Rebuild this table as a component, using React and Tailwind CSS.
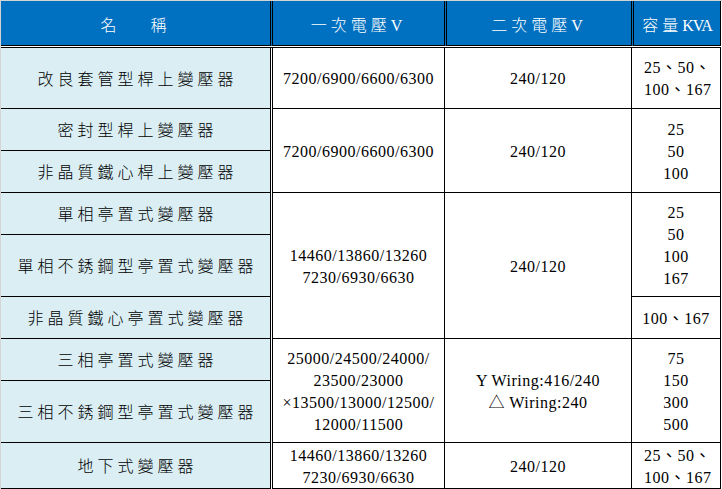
import React from 'react';

const nameCell =
  "flex items-center justify-center pl-[4px] pt-[3px] bg-[#daeef3] border-r border-b border-black tracking-[4px] text-[16px] font-light";
const valCell =
  "flex flex-col items-center justify-center pt-[2px] border-r border-b border-black text-[16px] leading-[22px] tracking-[0.5px]";

const names = [
  '改良套管型桿上變壓器',
  '密封型桿上變壓器',
  '非晶質鐵心桿上變壓器',
  '單相亭置式變壓器',
  '單相不銹鋼型亭置式變壓器',
  '非晶質鐵心亭置式變壓器',
  '三相亭置式變壓器',
  '三相不銹鋼型亭置式變壓器',
  '地下式變壓器',
];

const Lines = ({ items }) => items.map((t, i) => <div key={i}>{t}</div>);

const App = () => {
  return (
    <div className="w-[722px] h-[489px] bg-white border-t border-l border-[#d4d4d4] font-['Liberation_Serif','Noto_Sans_CJK_TC',serif] text-black">
      {/* Header row */}
      <div className="flex h-[45px] w-[720px] bg-[#0070c0] text-white text-[16px] tracking-[4px] font-light">
        <div className="w-[270px] flex items-center justify-center pt-[6px] border-r border-b border-black">
          <span>名</span>
          <span className="ml-[30px]">稱</span>
        </div>
        <div className="ml-px w-[173px] flex items-center justify-center pt-[6px] border-x border-b border-black">
          一次電壓V
        </div>
        <div className="ml-px w-[186px] flex items-center justify-center pt-[6px] border-x border-b border-black">
          二次電壓V
        </div>
        <div className="ml-px w-[88px] flex items-center justify-center pt-[6px] border-x border-b border-black">
          容量<span className="tracking-[-1px]">KVA</span>
        </div>
      </div>
      <div className="h-px" />

      {/* Body */}
      <div className="grid w-[720px] border-t border-black grid-cols-[270px_1px_173px_187px_89px] grid-rows-[61px_42px_42px_42px_62px_42px_42px_62px_46px]">
        {names.map((n, i) => (
          <div key={n} className={nameCell} style={{ gridRow: i + 1, gridColumn: 1 }}>
            {n}
          </div>
        ))}

        {/* 一次電壓 */}
        <div className={`${valCell} border-l col-start-3 row-start-1`}>7200/6900/6600/6300</div>
        <div className={`${valCell} border-l col-start-3 row-start-2 row-span-2`}>7200/6900/6600/6300</div>
        <div className={`${valCell} border-l col-start-3 row-start-4 row-span-3`}>
          <Lines items={['14460/13860/13260', '7230/6930/6630']} />
        </div>
        <div className={`${valCell} border-l col-start-3 row-start-7 row-span-2`}>
          <Lines items={['25000/24500/24000/', '23500/23000', '×13500/13000/12500/', '12000/11500']} />
        </div>
        <div className={`${valCell} border-l col-start-3 row-start-9`}>
          <Lines items={['14460/13860/13260', '7230/6930/6630']} />
        </div>

        {/* 二次電壓 */}
        <div className={`${valCell} col-start-4 row-start-1`}>240/120</div>
        <div className={`${valCell} col-start-4 row-start-2 row-span-2`}>240/120</div>
        <div className={`${valCell} col-start-4 row-start-4 row-span-3`}>240/120</div>
        <div className={`${valCell} col-start-4 row-start-7 row-span-2`}>
          <Lines items={['Y Wiring:416/240', '△ Wiring:240']} />
        </div>
        <div className={`${valCell} col-start-4 row-start-9`}>240/120</div>

        {/* 容量 */}
        <div className={`${valCell} !items-start pl-[12px] col-start-5 row-start-1`}>
          <Lines items={['25、50、', '100、167']} />
        </div>
        <div className={`${valCell} col-start-5 row-start-2 row-span-2`}>
          <Lines items={['25', '50', '100']} />
        </div>
        <div className={`${valCell} col-start-5 row-start-4 row-span-2`}>
          <Lines items={['25', '50', '100', '167']} />
        </div>
        <div className={`${valCell} col-start-5 row-start-6`}>100、167</div>
        <div className={`${valCell} col-start-5 row-start-7 row-span-2`}>
          <Lines items={['75', '150', '300', '500']} />
        </div>
        <div className={`${valCell} !items-start pl-[12px] col-start-5 row-start-9`}>
          <Lines items={['25、50、', '100、167']} />
        </div>
      </div>
    </div>
  );
};

export default App;
